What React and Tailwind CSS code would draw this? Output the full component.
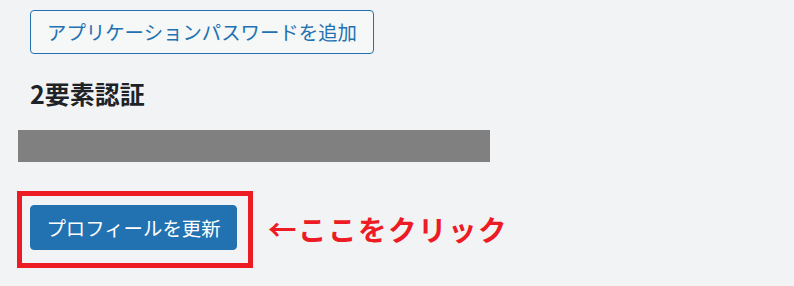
import React from 'react';

const jp = "font-['Noto_Sans_CJK_JP','Noto_Sans',sans-serif]";

export default function App() {
  return (
    <div className={`w-[794px] h-[286px] bg-[#f2f3f5] pt-[10px] overflow-hidden ${jp}`}>
      {/* secondary button */}
      <button className="ml-[30px] h-[44px] w-[344px] rounded-[4px] border border-[#2271b1] bg-[#f6f7f7] text-[#2271b1] text-[19.4px] leading-none">
        アプリケーションパスワードを追加
      </button>

      <h2 className="mt-[23px] ml-[30px] h-[32px] leading-[32px] text-[25px] font-bold text-[#1d2327]">
        2要素認証
      </h2>

      {/* redacted block */}
      <div className="mt-[21px] ml-[18px] w-[472px] h-[32px] bg-[#808080]" />

      <div className="mt-[29px] ml-[17px] flex items-center">
        <div className="w-[236px] h-[77px] border-[5px] border-[#ed1c24] pl-[8px] pt-[9px]">
          <button className="h-[45px] w-[207px] rounded-[4px] border border-[#2271b1] bg-[#2271b1] text-white text-[19.4px] leading-none">
            プロフィールを更新
          </button>
        </div>
        <span className="ml-[15px] text-[28.5px] font-bold tracking-[1.5px] text-[#ed1c24] leading-none">
          ←ここをクリック
        </span>
      </div>
    </div>
  );
}
